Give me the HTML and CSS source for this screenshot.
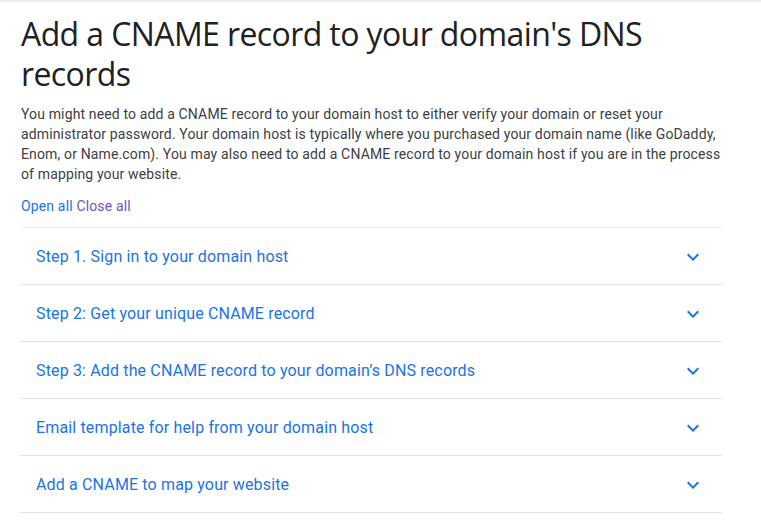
FILE: index.html
```html
<!DOCTYPE html>
<html lang="en">
<head>
<meta charset="utf-8">
<title>Add a CNAME record</title>
<link rel="stylesheet" href="styles.css">
</head>
<body>
<div class="topshadow"></div>
<main class="page">
  <h1 class="title">Add a CNAME record to your domain's DNS records</h1>
  <p class="intro">You might need to add a CNAME record to your domain host to either verify your domain or reset your administrator password. Your domain host is typically where you purchased your domain name (like GoDaddy, Enom, or Name.com). You may also need to add a CNAME record to your domain host if you are in the process of mapping your website.</p>
  <div class="toggles"><a class="open" href="#">Open all</a> <a class="close" href="#">Close all</a></div>
  <div class="accordion">
    <div class="item"><span class="label">Step 1. Sign in to your domain host</span><svg class="chev" viewBox="0 0 24 24" width="24" height="24"><path d="M7.41 8.59 12 13.17l4.59-4.58L18 10l-6 6-6-6z"/></svg></div>
    <div class="item"><span class="label">Step 2: Get your unique CNAME record</span><svg class="chev" viewBox="0 0 24 24" width="24" height="24"><path d="M7.41 8.59 12 13.17l4.59-4.58L18 10l-6 6-6-6z"/></svg></div>
    <div class="item"><span class="label">Step 3: Add the CNAME record to your domain’s DNS records</span><svg class="chev" viewBox="0 0 24 24" width="24" height="24"><path d="M7.41 8.59 12 13.17l4.59-4.58L18 10l-6 6-6-6z"/></svg></div>
    <div class="item"><span class="label">Email template for help from your domain host</span><svg class="chev" viewBox="0 0 24 24" width="24" height="24"><path d="M7.41 8.59 12 13.17l4.59-4.58L18 10l-6 6-6-6z"/></svg></div>
    <div class="item"><span class="label">Add a CNAME to map your website</span><svg class="chev" viewBox="0 0 24 24" width="24" height="24"><path d="M7.41 8.59 12 13.17l4.59-4.58L18 10l-6 6-6-6z"/></svg></div>
  </div>
</main>
</body>
</html>
```

FILE: styles.css
```css
html, body {
  margin: 0;
  padding: 0;
  background: #fff;
}
body {
  font-family: Roboto, "Liberation Sans", sans-serif;
  color: #3c4043;
}
.topshadow {
  height: 3px;
  background: linear-gradient(#e6e6e6, #fff);
}
.page {
  width: 702px;
  padding: 11px 0 0 20px;
}
.title {
  margin: 0;
  font-family: "Open Sans", Roboto, sans-serif;
  font-weight: 400;
  font-size: 32px;
  line-height: 40px;
  letter-spacing: -0.6px;
  color: #202124;
  padding-left: 1px;
}
.intro {
  margin: 10px 0 0 1px;
  font-size: 14px;
  line-height: 20px;
  letter-spacing: 0.14px;
  color: #3c4043;
}
.toggles {
  margin: 12px 0 0 1px;
  font-size: 14px;
  line-height: 20px;
  letter-spacing: 0.15px;
}
.toggles a {
  text-decoration: none;
}
.open { color: #1a73e8; }
.close { color: #7453c7; }
.accordion {
  margin-top: 11px;
  border-top: 1px solid #eeeeee;
}
.item {
  display: flex;
  align-items: center;
  justify-content: space-between;
  height: 55px;
  border-bottom: 1px solid #e3e3e6;
  padding: 1px 17px 0 16px;
  box-sizing: content-box;
}
.label {
  font-size: 16px;
  letter-spacing: 0.15px;
  color: #1a73e8;
}
.chev {
  fill: #1a73e8;
}
```
